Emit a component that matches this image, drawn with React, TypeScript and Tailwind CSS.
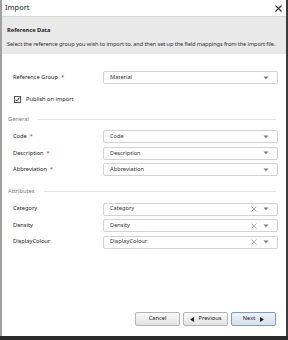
import React from 'react';

const font = { fontFamily: '"Noto Sans", "DejaVu Sans", sans-serif' };

function Caret() {
  return (
    <svg width="6" height="4" viewBox="0 0 6 4" className="shrink-0">
      <path d="M0.5 0.5h5L3 3.2z" fill="#777" />
    </svg>
  );
}

function Clear() {
  return (
    <svg width="6" height="6" viewBox="0 0 6 6" className="shrink-0">
      <path d="M0.5 0.5l5 5M5.5 0.5l-5 5" stroke="#9a9a9a" strokeWidth="0.8" />
    </svg>
  );
}

function Select({ value, clearable }: { value: string; clearable?: boolean }) {
  return (
    <div className="flex h-[13px] w-[175px] items-center rounded-[2px] border border-[#d2d2d2] bg-white pl-[6px] pr-[8px]">
      <span className="flex-1 text-[#333]">{value}</span>
      {clearable && (
        <span className="mr-[6px] flex">
          <Clear />
        </span>
      )}
      <Caret />
    </div>
  );
}

function Row({ label, required, value, clearable }: { label: string; required?: boolean; value: string; clearable?: boolean }) {
  return (
    <div className="flex h-[16.5px] items-center pl-[11px]">
      <div className="w-[90px] text-[#222]">
        {label}
        {required && <span className="ml-[3px] text-[#d9262a]">*</span>}
      </div>
      <Select value={value} clearable={clearable} />
    </div>
  );
}

function Legend({ title }: { title: string }) {
  return (
    <div className="flex items-center gap-[9px] pl-[6px] pr-[10px]">
      <span className="text-[#777]">{title}</span>
      <div className="h-px flex-1 bg-[#e3e3e3]" />
    </div>
  );
}

function Btn({ children, primary }: { children: React.ReactNode; primary?: boolean }) {
  return (
    <button
      className={
        primary
          ? 'flex h-[14px] w-[45px] items-center justify-center gap-[5px] rounded-[2px] border border-[#7d9ccc] bg-gradient-to-b from-[#eef2f8] to-[#d9e0ea] text-[#222]'
          : 'flex h-[14px] w-[45px] items-center justify-center gap-[5px] rounded-[2px] border border-[#b5b5b5] bg-gradient-to-b from-[#f8f8f8] to-[#e3e3e3] text-[#222]'
      }
    >
      {children}
    </button>
  );
}

export default function App() {
  return (
    <div className="flex h-[340px] w-[288px] flex-col bg-[#2b2b2b] text-[5.7px] leading-none" style={font}>
      <div className="flex flex-1 flex-col border-l-2 border-r-2 border-l-[#a0a0a0] border-r-[#3c3c3c] bg-white">
        <div className="flex h-[17px] items-center justify-between border-b border-[#d6d6d6] bg-white pl-[3px] pr-[4px]">
          <span className="text-[7.5px] text-[#222]">Import</span>
          <svg width="7" height="7" viewBox="0 0 7 7">
            <path d="M0.5 0.5l6 6M6.5 0.5l-6 6" stroke="#333" strokeWidth="1.1" />
          </svg>
        </div>
        <div className="bg-[#e9e9e9] px-[5px] pb-[7px] pt-[11px]">
          <div className="font-bold text-[#222]">Reference Data</div>
          <div className="mt-[8px] whitespace-nowrap tracking-[-0.12px] text-[#333]">
            Select the reference group you wish to import to, and then set up the field mappings from the import file.
          </div>
        </div>
        <div className="flex flex-1 flex-col pt-[15px]">
          <Row label="Reference Group" required value="Material" />
          <div className="mt-[10px] flex items-center gap-[5px] pl-[12px]">
            <div className="flex h-[7px] w-[7px] items-center justify-center border border-[#555] bg-white">
              <svg width="5" height="5" viewBox="0 0 5 5">
                <path d="M0.8 2.6l1.2 1.3L4.3 0.8" stroke="#222" strokeWidth="0.9" fill="none" />
              </svg>
            </div>
            <span className="text-[#222]">Publish on import</span>
          </div>
          <div className="mt-[14px]">
            <Legend title="General" />
          </div>
          <div className="mt-[6px] flex flex-col">
            <Row label="Code" required value="Code" />
            <Row label="Description" required value="Description" />
            <Row label="Abbreviation" required value="Abbreviation" />
          </div>
          <div className="mt-[11px]">
            <Legend title="Attributes" />
          </div>
          <div className="mt-[6px] flex flex-col">
            <Row label="Category" value="Category" clearable />
            <Row label="Density" value="Density" clearable />
            <Row label="DisplayColour" value="DisplayColour" clearable />
          </div>
          <div className="mt-auto flex justify-end gap-[3px] pb-[10px] pr-[10px]">
            <Btn>Cancel</Btn>
            <Btn>
              <svg width="4" height="5" viewBox="0 0 4 5"><path d="M4 0v5L0 2.5z" fill="#222" /></svg>
              Previous
            </Btn>
            <Btn primary>
              Next
              <svg width="4" height="5" viewBox="0 0 4 5"><path d="M0 0v5l4-2.5z" fill="#222" /></svg>
            </Btn>
          </div>
        </div>
      </div>
      <div className="h-[4px] bg-[#2b2b2b]" />
    </div>
  );
}
